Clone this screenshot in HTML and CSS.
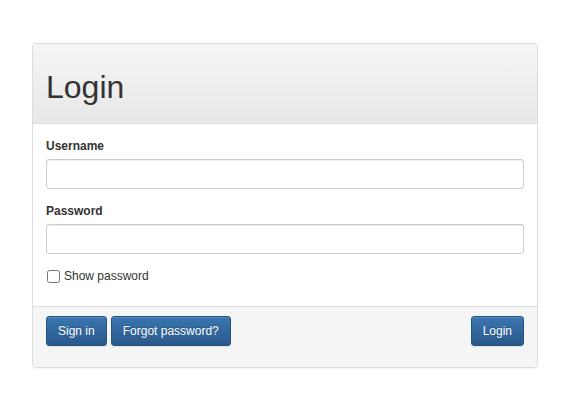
FILE: index.html
```html
<!DOCTYPE html>
<html lang="en">
<head>
<meta charset="utf-8">
<title>Login</title>
<link rel="stylesheet" href="styles.css">
</head>
<body>
<div class="page">
  <form class="panel">
    <div class="panel-heading">
      <h1 class="title">Login</h1>
    </div>
    <div class="panel-body">
      <div class="form-group">
        <label class="label" for="username">Username</label>
        <input class="input" id="username" type="text">
      </div>
      <div class="form-group">
        <label class="label" for="password">Password</label>
        <input class="input" id="password" type="password">
      </div>
      <label class="checkbox">
        <input class="check" type="checkbox">
        <span>Show password</span>
      </label>
    </div>
    <div class="panel-footer">
      <div class="left-actions">
        <button type="button" class="btn">Sign in</button>
        <button type="button" class="btn">Forgot password?</button>
      </div>
      <button type="button" class="btn">Login</button>
    </div>
  </form>
</div>
</body>
</html>
```

FILE: styles.css
```css
* { box-sizing: border-box; }

html, body {
  margin: 0;
  padding: 0;
  background: #fff;
}

body {
  font-family: "Liberation Sans", Arial, Helvetica, sans-serif;
  font-size: 12px;
  color: #333;
}

.page {
  padding: 43px 32px;
}

.panel {
  display: flex;
  flex-direction: column;
  border: 1px solid #ddd;
  border-radius: 4px;
  background: #fff;
  box-shadow: 0 1px 2px rgba(0, 0, 0, 0.05);
  overflow: hidden;
}

.panel-heading {
  padding: 26px 13px 18px;
  background: linear-gradient(to bottom, #f5f5f5 0%, #e8e8e8 100%);
  border-bottom: 1px solid #ddd;
}

.title {
  margin: 0;
  font-size: 32px;
  font-weight: 400;
  line-height: 35px;
  color: #333;
}

.panel-body {
  padding: 14px 13px 21px;
  display: flex;
  flex-direction: column;
}

.form-group {
  display: flex;
  flex-direction: column;
  margin-bottom: 14px;
}

.label {
  font-weight: 700;
  line-height: 17px;
  margin-bottom: 4px;
}

.input {
  height: 30px;
  padding: 5px 10px;
  font: inherit;
  color: #555;
  background: #fff;
  border: 1px solid #ccc;
  border-radius: 3px;
  box-shadow: inset 0 1px 1px rgba(0, 0, 0, 0.075);
  outline: none;
}

.checkbox {
  display: flex;
  align-items: center;
  line-height: 17px;
  height: 17px;
}

.check {
  width: 13px;
  height: 13px;
  margin: 0 4px 0 1px;
}

.panel-footer {
  display: flex;
  justify-content: space-between;
  align-items: flex-start;
  padding: 9px 13px 21px;
  background: #f5f5f5;
  border-top: 1px solid #ddd;
}

.left-actions {
  display: flex;
  gap: 4px;
}

.btn {
  height: 30px;
  padding: 5px 11px;
  font: inherit;
  line-height: 18px;
  color: #fff;
  text-shadow: 0 -1px 0 rgba(0, 0, 0, 0.2);
  background: linear-gradient(to bottom, #3a76b0 0%, #2a5889 100%);
  border: 1px solid #245580;
  border-radius: 3px;
  box-shadow: inset 0 1px 0 rgba(255, 255, 255, 0.15), 0 1px 1px rgba(0, 0, 0, 0.075);
  cursor: pointer;
}
```
